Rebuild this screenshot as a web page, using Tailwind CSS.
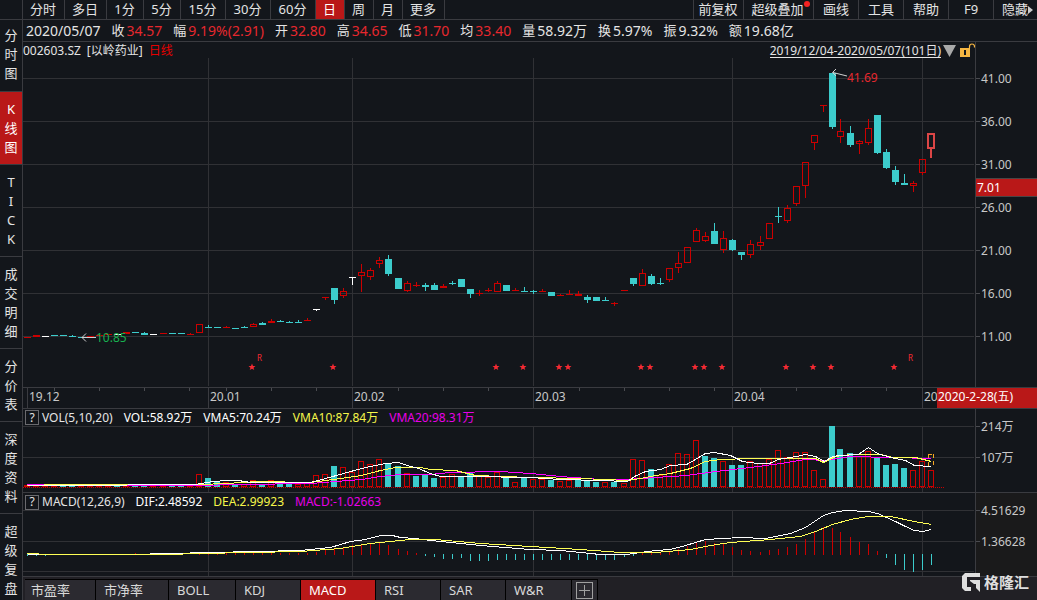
<!DOCTYPE html>
<html lang="zh-CN">
<head>
<meta charset="utf-8">
<title>以岭药业 日线</title>
<script src="https://cdn.jsdelivr.net/npm/@tailwindcss/browser@4"></script>
</head>
<body class="flex h-screen flex-col overflow-hidden bg-[#13161b] font-['Noto_Sans','Noto_Sans_CJK_SC',sans-serif] text-[13px] leading-none text-[#e4e4e4]">

<header class="flex h-5 shrink-0 border-b border-[#3a3b40] pl-[22px] whitespace-nowrap">
  <nav class="flex flex-1" aria-label="周期">
    <button class="w-[42px] border-l border-[#3a3b40] pr-px">分时</button>
    <button class="w-[42px] border-l border-[#3a3b40] pr-px">多日</button>
    <button class="w-[37px] border-l border-[#3a3b40] pr-px">1分</button>
    <button class="w-[37px] border-l border-[#3a3b40] pr-px">5分</button>
    <button class="w-[45px] border-l border-[#3a3b40] pr-px">15分</button>
    <button class="w-[45px] border-l border-[#3a3b40] pr-px">30分</button>
    <button class="w-[45px] border-l border-[#3a3b40] pr-px">60分</button>
    <button class="w-[29px] border-l border-[#3a3b40] bg-[#b91818] pr-px text-white">日</button>
    <button class="w-[29px] border-l border-[#3a3b40] pr-px">周</button>
    <button class="w-[29px] border-l border-[#3a3b40] pr-px">月</button>
    <button class="w-[43px] border-x border-[#3a3b40] pr-px">更多</button>
  </nav>
  <div class="flex">
    <button class="w-[50px] border-l border-[#3a3b40] pr-px">前复权</button>
    <button class="relative w-[70px] border-l border-[#3a3b40] pr-0.5">超级叠加<span class="absolute top-px right-[3px] size-1.5 rounded-full bg-[#f32222]"></span></button>
    <button class="w-[45px] border-l border-[#3a3b40]">画线</button>
    <button class="w-[45px] border-l border-[#3a3b40]">工具</button>
    <button class="w-[45px] border-l border-[#3a3b40]">帮助</button>
    <button class="w-[45px] border-l border-[#3a3b40]">F9</button>
    <button class="flex w-11 items-center border-l border-[#3a3b40] pl-2">隐藏<svg class="h-2 w-[5px]" viewBox="0 0 5 8"><path d="M0 0L5 4L0 8Z" fill="#ccc"/></svg></button>
  </div>
</header>

<div class="flex min-h-0 flex-1">
  <nav class="flex w-[23px] shrink-0 flex-col overflow-hidden border-r border-[#3a3b40] text-center leading-[19px]" aria-label="功能">
    <button class="shrink-0 border-b border-[#3a3b40] px-1 pt-1.5 pb-2">分<br>时<br>图</button>
    <button class="shrink-0 border-b border-[#3a3b40] bg-[#b91818] px-1 pt-2 pb-[7px] text-white">K<br>线<br>图</button>
    <button class="shrink-0 border-b border-[#3a3b40] px-1 pt-2 pb-[7px]">T<br>I<br>C<br>K</button>
    <button class="shrink-0 border-b border-[#3a3b40] px-1 pt-2 pb-[7px]">成<br>交<br>明<br>细</button>
    <button class="shrink-0 border-b border-[#3a3b40] px-1 pt-2 pb-[7px]">分<br>价<br>表</button>
    <button class="shrink-0 border-b border-[#3a3b40] px-1 pt-2 pb-[7px]">深<br>度<br>资<br>料</button>
    <button class="shrink-0 px-1 pt-2">超<br>级<br>复<br>盘</button>
  </nav>

  <main class="flex min-w-0 flex-1 flex-col">
    <div class="flex h-[22px] shrink-0 items-center gap-[11px] border-b border-[#3a3b40] pl-[3px] text-sm leading-none whitespace-nowrap">
      <span>2020/05/07</span>
      <span class="flex items-center gap-0.5"><span class="text-[13px]">收</span><span class="text-[#e6282e]">34.57</span></span>
      <span class="flex items-center gap-0.5"><span class="text-[13px]">幅</span><span class="text-[#e6282e]">9.19%(2.91)</span></span>
      <span class="flex items-center gap-0.5"><span class="text-[13px]">开</span><span class="text-[#e6282e]">32.80</span></span>
      <span class="flex items-center gap-0.5"><span class="text-[13px]">高</span><span class="text-[#e6282e]">34.65</span></span>
      <span class="flex items-center gap-0.5"><span class="text-[13px]">低</span><span class="text-[#e6282e]">31.70</span></span>
      <span class="flex items-center gap-0.5"><span class="text-[13px]">均</span><span class="text-[#e6282e]">33.40</span></span>
      <span class="flex items-center gap-0.5"><span class="text-[13px]">量</span><span>58.92万</span></span>
      <span class="flex items-center gap-0.5"><span class="text-[13px]">换</span><span>5.97%</span></span>
      <span class="flex items-center gap-0.5"><span class="text-[13px]">振</span><span>9.32%</span></span>
      <span class="flex items-center gap-0.5"><span class="text-[13px]">额</span><span>19.68亿</span></span>
    </div>

    <section class="flex min-h-0 flex-1">
      <div class="flex min-w-0 flex-1 flex-col">
        <div class="flex h-4 shrink-0 items-center pt-px text-xs leading-none whitespace-nowrap">
          <span>002603.SZ</span><span class="ml-1.5">[以岭药业]</span><span class="ml-1.5 text-[#e60000]">日线</span>
          <a href="#range" class="ml-auto border-b border-[#e4e4e4] leading-[13px]">2019/12/04-2020/05/07(101日)</a>
          <svg class="ml-0.5 h-3 w-[13px]" viewBox="0 0 13 12"><path d="M0 0H13L6.500 12Z" fill="#a9a9a9"/></svg>
          <svg class="ml-1 h-[15px] w-[15px]" viewBox="0 0 15 15"><rect y="5" width="10" height="9" fill="#f5b642"/><path d="M4 7H6V12H4Z" fill="#13161b"/><path d="M9.500 5V3.500Q9.500 1 12 1T14.500 3.500V4.500" fill="none" stroke="#f5b642" stroke-width="1.200"/></svg>
        </div>
        <svg id="price" class="block min-h-0 w-full flex-1" viewBox="23 58 952 329" preserveAspectRatio="none"></svg>
      </div>
      <div class="relative flex w-[62px] shrink-0 flex-col border-l border-[#3a3b40] pt-[15px] pb-[29px] text-xs text-[#c8c8c8]">
        <div class="flex flex-1 items-center gap-px"><i class="h-px w-1 bg-[#4a4b50]"></i>41.00</div>
        <div class="flex flex-1 items-center gap-px"><i class="h-px w-1 bg-[#4a4b50]"></i>36.00</div>
        <div class="flex flex-1 items-center gap-px"><i class="h-px w-1 bg-[#4a4b50]"></i>31.00</div>
        <div class="flex flex-1 items-center gap-px"><i class="h-px w-1 bg-[#4a4b50]"></i>26.00</div>
        <div class="flex flex-1 items-center gap-px"><i class="h-px w-1 bg-[#4a4b50]"></i>21.00</div>
        <div class="flex flex-1 items-center gap-px"><i class="h-px w-1 bg-[#4a4b50]"></i>16.00</div>
        <div class="flex flex-1 items-center gap-px"><i class="h-px w-1 bg-[#4a4b50]"></i>11.00</div>
        <div class="absolute top-[136px] left-0 flex h-[19px] w-full items-center border-y border-[#4b4545] bg-[#b91818] pl-px text-white">7.01</div>
      </div>
    </section>

    <div class="relative flex h-[22px] shrink-0 border-y border-[#3a3b40] text-xs leading-[18px] text-[#c8c8c8]">
      <div class="relative grid flex-1 grid-cols-[181fr_144fr_181fr_199fr_190fr_53fr] overflow-hidden pl-1">
        <span class="border-l border-[#3a3b40] pl-px">19.12</span>
        <span class="border-l border-[#3a3b40] pl-px">20.01</span>
        <span class="border-l border-[#3a3b40] pl-px">20.02</span>
        <span class="border-l border-[#3a3b40] pl-px">20.03</span>
        <span class="border-l border-[#3a3b40] pl-px">20.04</span>
        <span class="border-l border-[#3a3b40] pl-px">20</span>
        <svg id="ticks" class="absolute top-0 left-0 h-[3px] w-full" viewBox="23 0 952 3" preserveAspectRatio="none"></svg>
      </div>
      <div class="w-[62px] border-l border-[#3a3b40]"></div>
      <div class="absolute inset-y-0 right-0 w-[100px] bg-[#b91818] pl-px text-white">2020-2-28(五)</div>
    </div>

    <section class="flex h-[84px] shrink-0 border-b border-[#3a3b40]">
      <div class="flex min-w-0 flex-1 flex-col">
        <div class="flex h-[17px] shrink-0 items-center gap-[11px] pl-0.5 text-xs leading-none whitespace-nowrap">
          <span class="flex items-center gap-[3px]"><button class="h-[15px] w-3.5 border border-[#6a6a6e]">?</button>VOL(5,10,20)</span>
          <span class="text-white">VOL:58.92万</span>
          <span class="text-white">VMA5:70.24万</span>
          <span class="text-[#f6f64a]">VMA10:87.84万</span>
          <span class="text-[#e800e8]">VMA20:98.31万</span>
        </div>
        <svg id="vol" class="block min-h-0 w-full flex-1" viewBox="23 426 952 66" preserveAspectRatio="none"></svg>
      </div>
      <div class="w-[62px] shrink-0 border-l border-[#3a3b40] pt-0.5 text-xs text-[#c8c8c8]">
        <div class="flex h-[31px] items-center gap-px"><i class="h-px w-1 bg-[#4a4b50]"></i>214万</div>
        <div class="flex h-[31px] items-center gap-px"><i class="h-px w-1 bg-[#4a4b50]"></i>107万</div>
      </div>
    </section>

    <section class="flex h-[84px] shrink-0 border-b border-[#3a3b40]">
      <div class="flex min-w-0 flex-1 flex-col">
        <div class="flex h-[17px] shrink-0 items-center gap-[11px] pt-px pl-0.5 text-xs leading-none whitespace-nowrap">
          <span class="flex items-center gap-[3px]"><button class="h-[15px] w-3.5 border border-[#6a6a6e]">?</button>MACD(12,26,9)</span>
          <span class="text-white">DIF:2.48592</span>
          <span class="text-[#f6f64a]">DEA:2.99923</span>
          <span class="text-[#e800e8]">MACD:-1.02663</span>
        </div>
        <svg id="macd" class="block min-h-0 w-full flex-1" viewBox="23 510 952 66" preserveAspectRatio="none"></svg>
      </div>
      <div class="w-[62px] shrink-0 border-l border-[#3a3b40] bg-[#1a1a1b] pt-0.5 text-xs text-[#c8c8c8]">
        <div class="flex h-[31px] items-center gap-px"><i class="h-px w-1 bg-[#4a4b50]"></i>4.51629</div>
        <div class="flex h-[31px] items-center gap-px"><i class="h-px w-1 bg-[#4a4b50]"></i>1.36628</div>
      </div>
    </section>

    <footer class="flex h-[23px] shrink-0 bg-[#212025] pt-0.5 pl-0.5 text-[#d8d8d8]">
      <nav class="flex border-t border-black text-left" aria-label="指标">
        <button class="w-[71px] border-r border-black bg-[#2b2a30] pl-1.5 text-left">市盈率</button>
        <button class="w-[73px] border-r border-black bg-[#2b2a30] pl-2 text-left">市净率</button>
        <button class="w-[67px] border-r border-black bg-[#2b2a30] pl-2 text-left">BOLL</button>
        <button class="w-[65px] border-r border-black bg-[#2b2a30] pl-2 text-left">KDJ</button>
        <button class="w-[75px] border-r border-black bg-[#b91818] pl-2 text-left text-white">MACD</button>
        <button class="w-[65px] border-r border-black bg-[#2b2a30] pl-2 text-left">RSI</button>
        <button class="w-[65px] border-r border-black bg-[#2b2a30] pl-2 text-left">SAR</button>
        <button class="w-[66px] border-r border-black bg-[#2b2a30] pl-2 text-left">W&amp;R</button>
        <button class="w-[26px] border-r border-black bg-[#2b2a30] pl-1" aria-label="添加指标"><svg class="size-[17px]" viewBox="0 0 17 17" fill="none" stroke="#a0a0a0" shape-rendering="crispEdges"><path d="M.5 .5H16.500V16.500H.5ZM3 8.500H14M8.500 3V14"/></svg></button>
      </nav>
    </footer>
  </main>
</div>

<div class="absolute right-2 bottom-2 flex items-center gap-[3px] text-[15px] leading-none font-bold text-[#dedede]">
  <svg class="h-[19px] w-[19px]" viewBox="0 0 19 19" fill="#dedede"><path d="M3 0H18V4H5V14H9V18H3L0 15V3ZM8 7H18V19L14 15V11H12L8 8Z"/></svg>
  <span>格隆汇</span>
</div>

<script>
const RED = '#cc0000', CYAN = '#3ccccc', GRID = '#303135';
const COLOR = { r: RED, c: CYAN, w: '#ffffff' };
const X = i => Math.round(26.9 + 9.04 * i) + (i > 80 && i < 90 ? 1 : 0);
const rect = (x, y, w, h, f) => `<rect x="${x}" y="${y}" width="${w}" height="${h}" fill="${f}"/>`;
const box = (x, y, w, h, c, s = 1) => `<rect x="${x + s / 2}" y="${y + s / 2}" width="${w - s}" height="${h - s}" fill="none" stroke="${c}" stroke-width="${s}"/>`;
const line = (pts, c) => `<polyline points="${pts}" transform="translate(.5 .5)" fill="none" stroke="${c}"/>`;
const months = [208, 352, 533, 732, 922];
const grid = (rows, top, h) => rows.map(y => rect(23, y, 951, 1, GRID)).join('') + months.map(x => rect(x, top, 1, h, GRID)).join('');
const crisp = s => `<g shape-rendering="crispEdges">${s}</g>`;

// colour, high, body top, body bottom, low
const candles = `r 337 337 337 337;r 335 335 336 336;w 336 336 336 336;c 335 335 335 335;c 335 335 335 335;c 335 336 336 336;c 337 337 337 337;r 336 336 336 336;r 335 335 335 335;r 334 334 334 334;w 334 334 334 334;r 332 332 333 333;c 332 332 332 332;c 332 333 334 334;w 334 334 334 334;r 333 333 333 333;c 333 333 333 333;c 333 333 333 333;r 333 334 334 334;r 324 324 332 332;c 325 327 327 327;c 327 327 327 327;r 326 327 327 327;c 328 328 328 328;c 326 327 327 327;r 323 324 326 326;c 322 323 324 324;r 319 321 322 322;c 320 321 321 321;c 321 322 322 322;c 320 322 322 322;r 318 320 320 320;w 309 309 309 310;r 297 297 297 299;c 288 288 299 303;r 288 291 295 297;w 277 277 277 284;r 264 272 275 291;r 268 270 276 279;r 257 260 263 267;c 255 259 273 275;c 278 278 288 288;r 281 283 290 291;r 282 285 285 286;c 283 285 286 290;c 283 285 289 289;r 284 286 287 287;c 281 283 283 284;c 279 279 286 286;c 289 289 293 297;r 290 293 293 295;r 288 290 290 291;r 281 283 291 291;c 285 285 290 290;r 288 290 290 290;c 287 291 291 291;c 290 291 291 293;r 289 291 291 291;c 292 292 295 295;r 294 295 295 295;r 290 294 294 294;r 291 294 295 295;c 295 297 299 302;c 297 297 300 300;c 297 300 300 300;r 302 303 303 305;r 290 290 290 290;c 278 278 283 285;r 269 273 285 285;c 274 276 283 284;c 278 283 283 284;r 268 268 279 281;r 252 263 267 272;r 247 247 262 262;r 228 230 241 241;r 232 236 240 241;c 223 231 243 243;r 231 238 249 252;c 239 240 249 250;c 252 252 254 259;r 240 244 254 257;r 236 242 245 249;r 223 223 238 238;c 207 216 216 222;r 205 208 220 222;r 186 186 203 205;r 162 162 185 197;r 135 135 142 149;r 105 105 105 111;c 73 73 126 128;r 119 131 136 142;c 126 133 144 146;r 140 141 143 153;r 119 128 142 144;c 115 115 152 153;c 149 152 167 168;c 166 170 181 184;c 174 183 184 184;r 181 183 185 191;r 159 159 172 174`.split(';').map(s => s.split(' '));
let s = grid([78, 121, 164, 207, 250, 293, 336], 58, 328);
candles.forEach(([k, ...v], i) => {
  const [hi, t, b, lo] = v.map(Number), x = X(i), c = COLOR[k], h = b - t + 1;
  if (hi < t) s += rect(x, hi, 1, t - hi, c);
  if (lo > b) s += rect(x, b + 1, 1, lo - b, c);
  s += k === 'r' && h > 2 ? box(x - 3, t, 7, h, c) : rect(x - 3, t, 7, h, c);
});
s += box(927, 133, 8, 16, '#dc4646', 2) + rect(930, 149, 2, 9, '#dc4646');
let marks = [252, 333, 496, 523, 559, 568, 641, 650, 695, 704, 722, 786, 813, 831, 894].map(x =>
  `<path transform="translate(${x} 367)" d="M0-3.500L1-1H3.500L1.500 .7L2.300 3L0 1.700L-2.300 3L-1.500 .7L-3.500-1H-1Z" fill="#f52a32"/>`).join('');
const note = (x, y, t, c, f) => `<text x="${x}" y="${y}" fill="${c}" font-size="${f}">${t}</text>`;
marks += note(257, 361, 'R', '#f52a32', 8) + note(908, 361, 'R', '#f52a32', 8)
  + note(96, 342, '10.85', '#18b050', 12) + note(847, 82, '41.69', '#e6282e', 12)
  + '<path d="M96 337.500H82M86 333.500L82 337.500L86 341.500M847 76L833 72.500M836 69L832.500 72.500L836 76" fill="none" stroke="#d0d0d0"/>';
document.getElementById('price').innerHTML = crisp(s) + marks;

document.getElementById('ticks').innerHTML = [54, 99, 144, 189, 226, 271, 316, 398, 443, 488, 579, 624, 669, 714, 760, 796, 841, 886].map(x => rect(x, 0, 1, 3, '#4a4b50')).join('');

// colour and top edge of each volume bar
const vols = 'r485 r485 r485 r485 c485 c485 r485 r485 r485 r484 c485 r485 c485 c485 r485 r485 c485 c485 r485 r474 c478 c482 r482 c484 r484 r480 c484 r480 c484 c484 r484 r483 r475 r474 c466 r467 r472 r461 r464 r459 c463 c466 r473 c476 c475 c478 r477 r474 c476 c473 r476 r477 r472 c476 r482 c478 r479 r479 c480 r481 r480 c480 c480 c482 r482 c482 r483 r459 r460 c469 r475 r464 r453 r454 r440 c456 c458 r461 c465 c465 r461 r463 r459 r450 r457 r452 r452 r470 r479 c426 c449 c453 r456 r451 c457 c465 c464 c468 r470 r461 r470'.split(' ');
s = grid([426, 457], 426, 66);
vols.forEach((v, i) => {
  const t = +v.slice(1), x = X(i) - 3, h = 487 - t;
  s += v[0] === 'r' && h > 2 ? box(x, t, 6, h, RED) : rect(x, t, 6, h, COLOR[v[0]]);
});
s += `<path d="M23 487.500H944" stroke="${RED}" stroke-dasharray="1 1"/><path d="M928.500 455V468M933.500 454V468M928 454.500H934" fill="none" stroke="#f5a623" stroke-dasharray="4 3"/>`;
s += line('27,484 60,485 195,485 240,484 310,483 361,479 380,476 400,474 430,474 450,472 500,471 530,473 560,476 600,479 627,479 655,477 686,475 715,471 750,467 780,463 805,459 825,460 850,456 890,457 931,458', '#ff00ff');
s += line('27,485 60,484 200,484 225,483 258,481 310,482 340,478 361,475 380,470 395,467 420,467 430,469 455,470 475,475 530,477 580,478 627,480 640,478 655,475 670,473 690,468 705,461 720,459 750,458 805,458 815,458 823,462 835,456 850,454 880,454 893,457 915,457 931,461', '#ffff55');
s += line('27,485 60,485 195,484 213,481 226,480 238,480 250,482 310,482 325,478 343,473 361,468 370,466 385,463 398,462 407,465 418,468 430,473 440,476 470,476 530,477 560,479 600,480 627,481 634,476 645,471 660,469 670,465 686,464 695,459 705,453 714,452 730,455 742,461 757,463 769,463 778,459 796,456 805,454 815,456 824,461 832,456 840,455 858,454 868,447 877,453 890,457 905,460 914,465 931,466', '#ffffff');
document.getElementById('vol').innerHTML = crisp(s);

// end of each histogram bar; the zero line lies at 554
const hist = [555,555,555,554,554,554,554,554,554,554,554,554,553,554,554,554,554,554,554,553,553,553,553,553,553,553,553,553,553,553,553,553,552,550,549,547,545,544,543,542,545,549,551,553,555,556,558,558,557,560,560,560,559,559,559,559,559,559,559,559,559,559,559,559,559,559,556,555,553,553,553,551,549,546,542,541,543,544,547,550,551,552,550,549,547,544,539,532,527,528,532,537,542,544,551,557,564,569,571,569,564];
s = grid([510, 541, 571], 510, 66);
hist.forEach((y, i) => {
  if (y < 554) s += rect(X(i), y, 1, 555 - y, RED);
  if (y > 554) s += rect(X(i), 554, 1, y - 553, CYAN);
});
s += line('27,554 130,554 170,553 210,552 300,550 330,547 350,541 365,539 380,535 392,535 400,537 415,538 430,540 450,542 480,545 530,549 560,550 600,554 626,554 640,552 655,550 670,549 685,545 705,539 740,537 765,538 790,533 805,527 823,515 832,512 845,510 868,511 877,513 886,517 895,521 905,526 914,530 922,531 931,529', '#ffffff');
s += line('27,553 50,554 165,554 200,553 300,551 340,548 370,543 410,539 435,539 480,543 530,546 580,549 620,552 655,552 690,549 710,545 730,542 770,539 800,536 815,531 832,524 850,519 868,516 890,516 914,521 931,524', '#ffff55');
document.getElementById('macd').innerHTML = crisp(s);
</script>
</body>
</html>
